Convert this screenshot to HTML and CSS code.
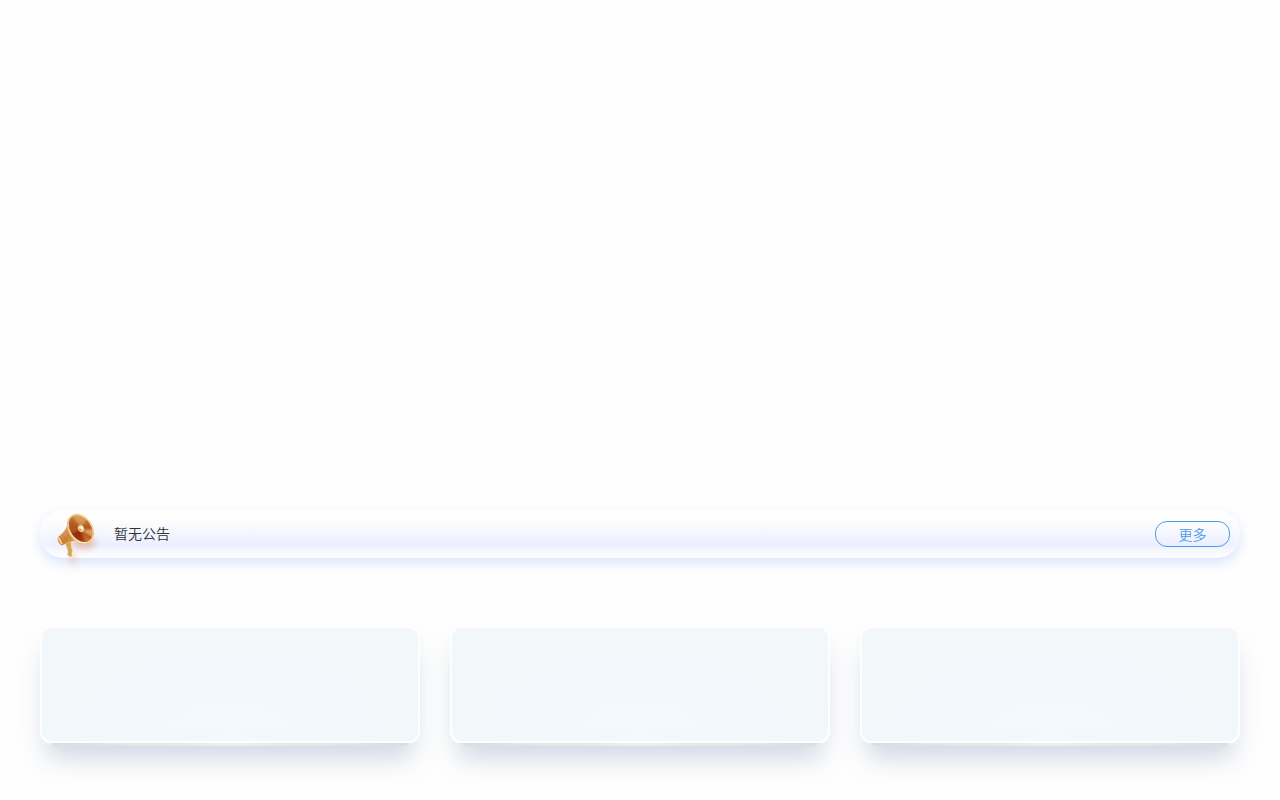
FILE: index.html
```
<!DOCTYPE html>
<html lang="zh-CN">
<head>
    <meta charset="UTF-8">
    <title>公告</title>
    <link rel="stylesheet" href="styles.css">
</head>
<body>
    <div class="banner"></div>

    <div class="container">
        <div class="notice">
            <svg class="notice-icon" viewBox="0 0 56 66">
                <defs>
                    <linearGradient id="rim" x1="0" y1="0" x2="1" y2="1">
                        <stop offset="0" stop-color="#e9b974"/>
                        <stop offset="0.5" stop-color="#fff0c8"/>
                        <stop offset="1" stop-color="#f5d49b"/>
                    </linearGradient>
                    <linearGradient id="cone" x1="0.6" y1="0" x2="0.4" y2="1">
                        <stop offset="0" stop-color="#dda458"/>
                        <stop offset="0.35" stop-color="#b96626"/>
                        <stop offset="0.65" stop-color="#9c350f"/>
                        <stop offset="1" stop-color="#cf7a2c"/>
                    </linearGradient>
                    <linearGradient id="gold" x1="0" y1="0" x2="1" y2="1">
                        <stop offset="0" stop-color="#f0c587"/>
                        <stop offset="0.55" stop-color="#cb8239"/>
                        <stop offset="1" stop-color="#e9b665"/>
                    </linearGradient>
                    <filter id="soft" x="-60%" y="-60%" width="220%" height="220%">
                        <feGaussianBlur stdDeviation="3.2"/>
                    </filter>
                    <filter id="blend">
                        <feGaussianBlur stdDeviation="0.9"/>
                    </filter>
                    <clipPath id="mouth">
                        <ellipse cx="30.700" cy="23.600" rx="10.300" ry="14.600" transform="rotate(-34 30.700 23.600)"/>
                    </clipPath>
                </defs>
                <g filter="url(#soft)">
                    <ellipse cx="34" cy="38" rx="12" ry="6" fill="#d9825d" opacity="0.45"/>
                    <ellipse cx="23" cy="54" rx="3" ry="7" fill="#e3a77a" opacity="0.4"/>
                </g>
                <path d="M15.500 38.500l5.500-2 .3 6 1.200 3-.8 2.500.6 2.500-2 1.500-2.700-2 .4-4z" fill="#d9a355" stroke="#f5d59b" stroke-width="0.8" stroke-dasharray="2 1"/>
                <path d="M18 17C17.500 22 14 27.500 8.500 31.500 6.500 34 8 38.500 12 40.500 18 36.500 24 35 31 36z" fill="url(#gold)"/>
                <path d="M12 29.500l6 7.500M10 31.500l5 7" stroke="#b66722" stroke-width="0.8" opacity="0.7"/>
                <path d="M8.500 33l3.500 6" stroke="#f7d59b" stroke-width="1.500"/>
                <ellipse cx="30.500" cy="24" rx="12" ry="16" transform="rotate(-34 30.500 24)" fill="url(#rim)" stroke="#dfa362" stroke-width="0.400"/>
                <g clip-path="url(#mouth)">
                    <rect x="15" y="6" width="34" height="36" fill="url(#cone)"/>
                    <g filter="url(#blend)">
                        <path d="M31 23L21 9Q32 8 37 14z" fill="#edbe77" opacity="0.5"/>
                        <path d="M31 24l-14-8q0 9 5 13z" fill="#b65c22" opacity="0.7"/>
                        <path d="M31 25l14-1q1 7-2 9z" fill="#f2c276" opacity="0.75"/>
                        <path d="M29 25l-8 4q6 8 14 9z" fill="#8c260b" opacity="0.65"/>
                        <path d="M32 27l4 12q6 0 7-4z" fill="#dc8530" opacity="0.6"/>
                    </g>
                </g>
                <ellipse cx="31" cy="23.500" rx="3" ry="3.500" transform="rotate(-30 31 23.500)" fill="#f7d9a0"/>
                <circle cx="30.400" cy="24.400" r="1.200" fill="#cf924d"/>
                <circle cx="31.600" cy="22.900" r="1.300" fill="#fffbe8"/>
            </svg>
            <div class="notice-text">暂无公告</div>
            <a class="more" href="#">更多</a>
        </div>

        <div class="cards">
            <div class="card"><div class="card-face"></div></div>
            <div class="card"><div class="card-face"></div></div>
            <div class="card"><div class="card-face"></div></div>
        </div>
    </div>
</body>
</html>
```
FILE: styles.css
```
body {
    margin: 0;
    background: #fefefe;
    font-family: "Liberation Sans", "Noto Sans CJK SC", sans-serif;
    font-size: 14px;
    font-weight: 350;
    color: #333;
}
.banner {
    height: 510px;
}
.container {
    width: 1200px;
    height: 290px;
    margin: 0 auto;
}
.notice {
    display: flex;
    align-items: center;
    height: 48px;
    padding: 0 10px;
    box-sizing: border-box;
    border-radius: 24px;
    background: linear-gradient(#fefefe 0%, #fefefe 20%, #f6f7ff 45%, #ebeeff 74%, #f6f7fe 84%, #fcfcfe 94%);
    box-shadow: 0 5px 12px rgba(200, 213, 255, 0.65), inset 10px 0 12px -4px rgba(255, 255, 255, 0.4), inset -10px 0 12px -4px rgba(255, 255, 255, 0.4);
}
.notice-icon {
    width: 56px;
    height: 66px;
    margin: 8px 8px 0 0;
    flex-shrink: 0;
}
.notice-text {
    flex: 1;
    line-height: 48px;
}
.more {
    width: 75px;
    height: 26px;
    box-sizing: border-box;
    border: 1px solid #4a9de8;
    border-radius: 12px;
    line-height: 27px;
    text-align: center;
    color: #4a9de8;
    text-decoration: none;
}
.cards {
    display: flex;
    gap: 30px;
    margin-top: 68px;
}
.card {
    width: 380px;
    height: 120px;
    border-radius: 10px 10px 16px 16px;
    background: linear-gradient(to right, rgba(255, 255, 255, 0.9) 4px, #d9e0e2 14px, #ebeeee 50%, #d9e0e2 366px, rgba(255, 255, 255, 0.9) 376px);
    box-shadow: 0 18px 26px -6px rgba(120, 142, 175, 0.34);
}
.card-face {
    height: 117px;
    box-sizing: border-box;
    border: 2px solid #fefefe;
    border-radius: 11px;
    background: radial-gradient(ellipse at 50% 100%, #f3f9fd, #f2f7fa 75%);
    box-shadow: inset 0 -2px 8px rgba(241, 249, 255, 0.9);
}
```
